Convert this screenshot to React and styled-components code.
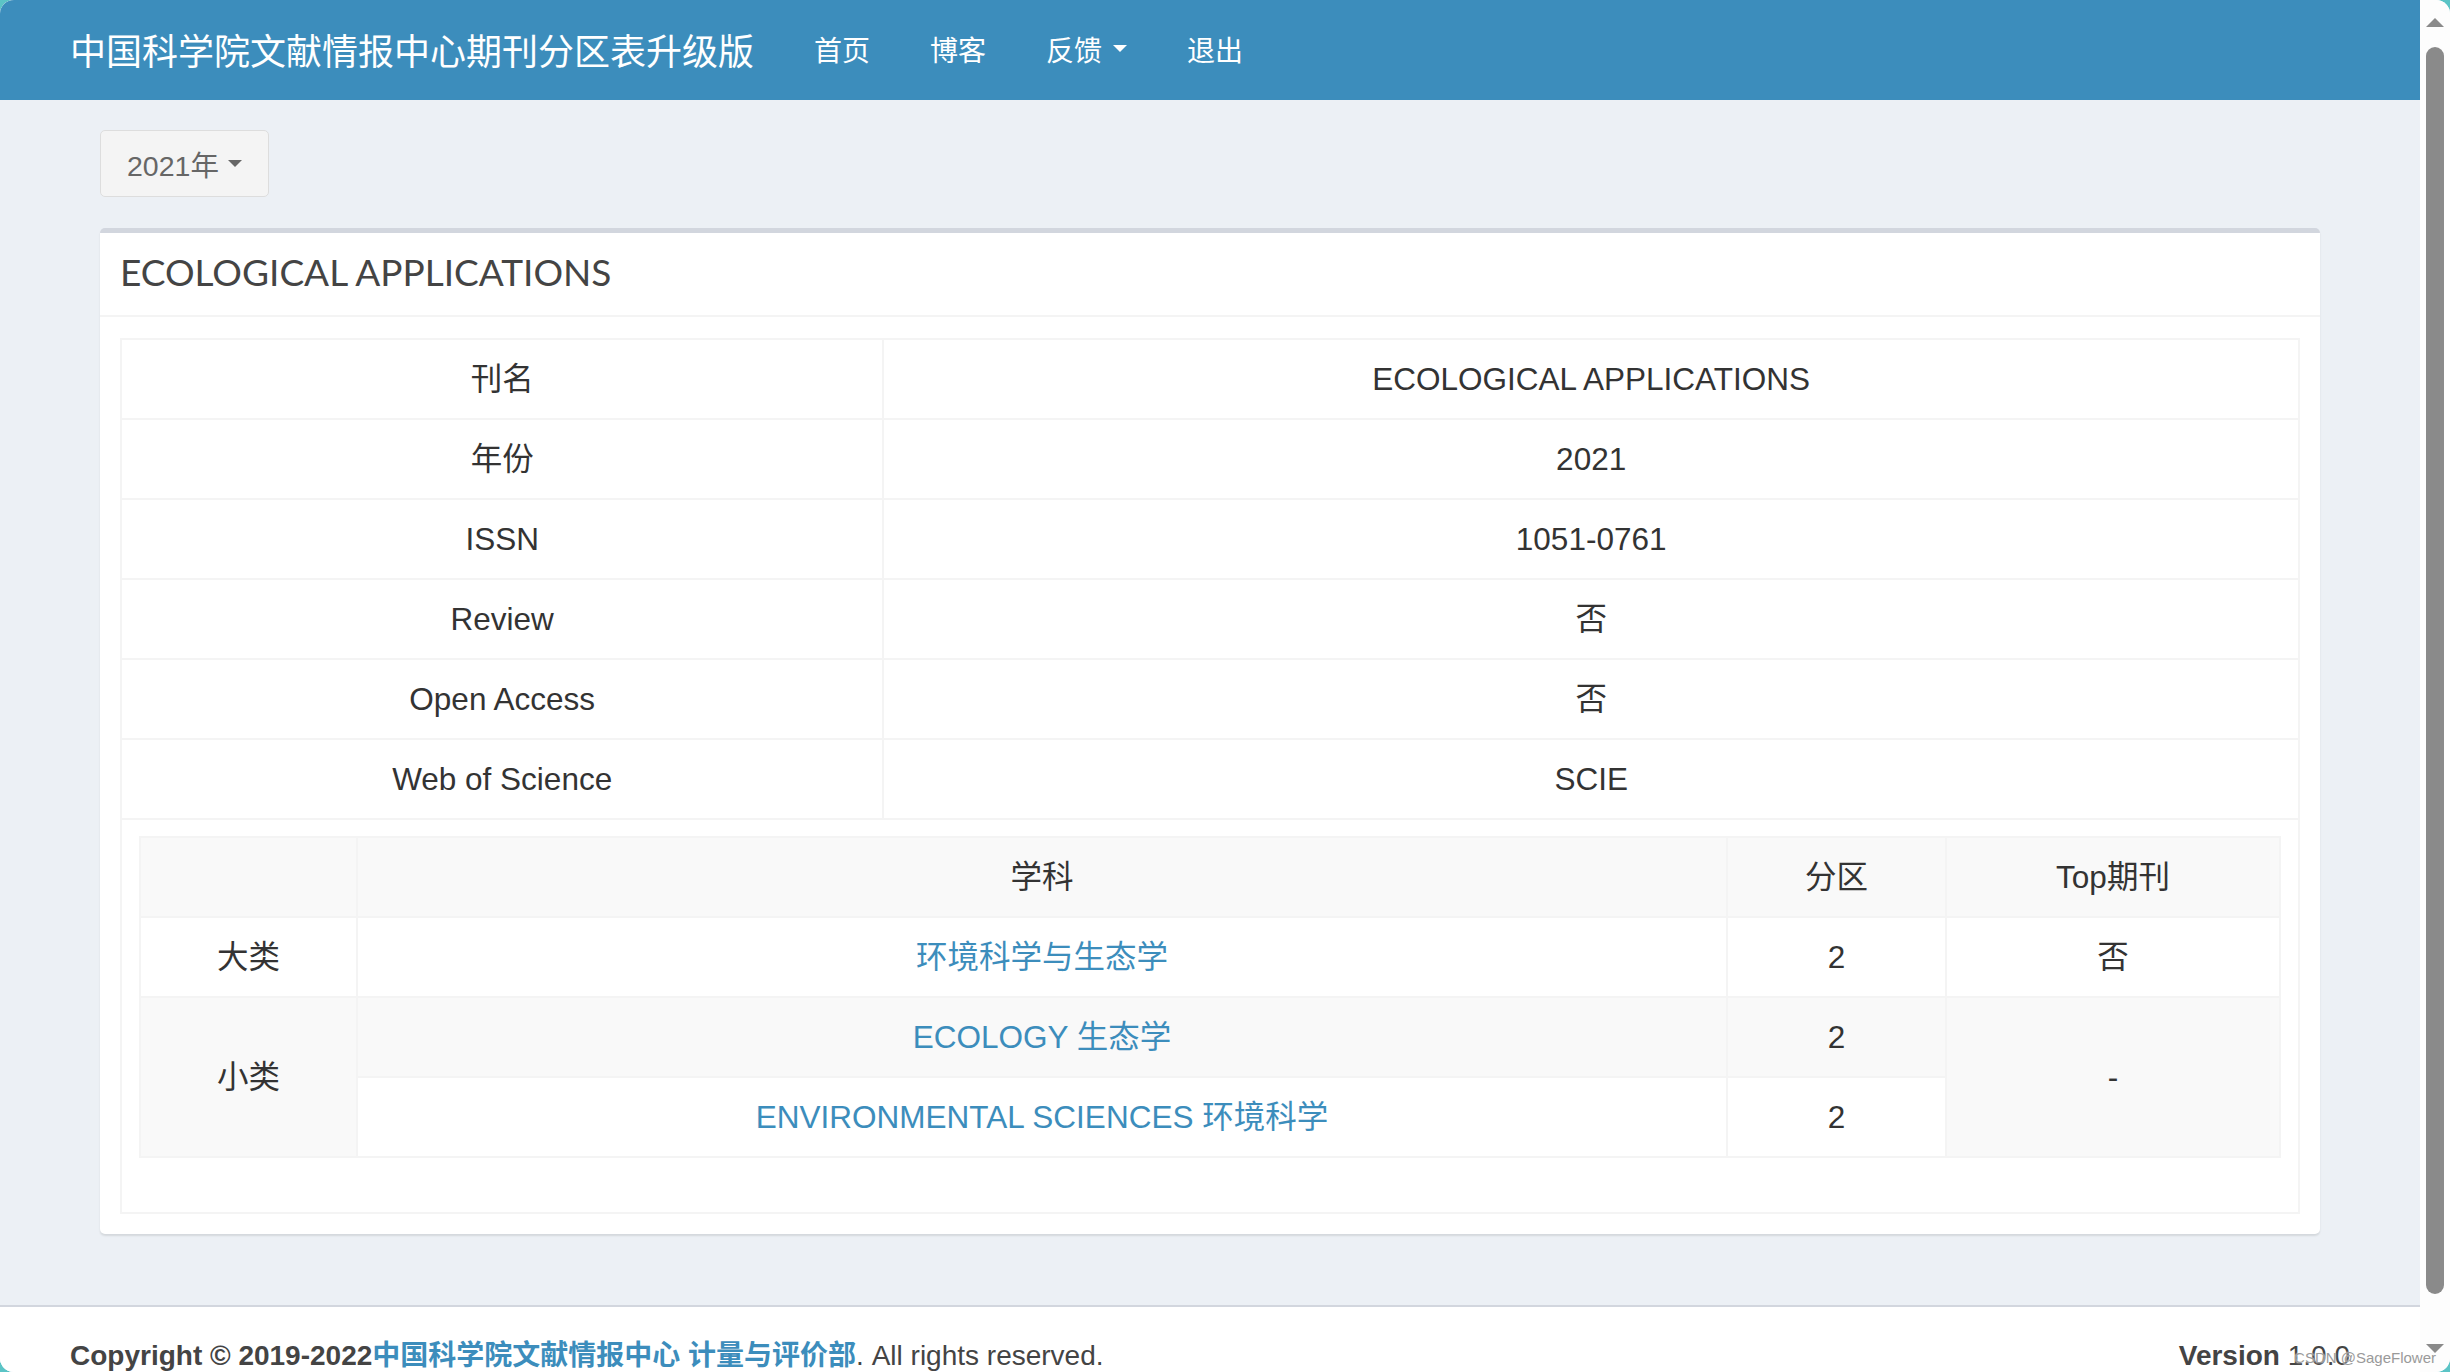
import React from "react";
import styled, { createGlobalStyle } from "styled-components";

const GlobalStyle = createGlobalStyle`
  html, body {
    margin: 0;
    padding: 0;
    overflow: hidden;
    background: #5bc4c6;
  }
  body {
    font-family: "Liberation Sans", "Noto Sans CJK SC", sans-serif;
    color: #333;
  }
  * {
    box-sizing: border-box;
  }
`;

const Screen = styled.div`
  position: relative;
  display: flex;
  width: 2450px;
  height: 1372px;
  border-radius: 14px;
  overflow: hidden;
  background: #fdfdfd;
`;

const Page = styled.div`
  flex: 1;
  min-width: 0;
  display: flex;
  flex-direction: column;
  background: #ecf0f5;
`;

const Header = styled.header`
  flex-shrink: 0;
  height: 100px;
  display: flex;
  align-items: center;
  padding: 0 0 3px 70px;
  background: #3c8dbc;
  color: #fff;
  font-family: "Noto Sans CJK SC", sans-serif;
`;

const Brand = styled.div`
  font-size: 36px;
  padding-right: 30px;
`;

const NavItem = styled.a`
  display: flex;
  align-items: center;
  gap: 11px;
  padding: 0 30px;
  font-size: 28px;
  color: #fff;
  text-decoration: none;
`;

const Caret = styled.span`
  display: inline-block;
  width: 0;
  height: 0;
  border-left: ${(p) => p.size}px solid transparent;
  border-right: ${(p) => p.size}px solid transparent;
  border-top: ${(p) => p.size}px solid ${(p) => p.color};
`;

const Content = styled.main`
  flex-shrink: 0;
  padding: 30px 100px 71px;
`;

const YearButton = styled.button`
  display: inline-flex;
  align-items: center;
  gap: 9px;
  height: 67px;
  padding: 0 26px 0 26px;
  font-family: "Liberation Sans", "Noto Sans CJK SC", sans-serif;
  font-size: 28.5px;
  color: #666;
  background: #f4f4f4;
  border: 1px solid #ddd;
  border-radius: 5px;
`;

const Box = styled.section`
  margin-top: 31px;
  background: #fff;
  border-top: 5px solid #d2d6de;
  border-radius: 5px;
  box-shadow: 0 2px 2px rgba(0, 0, 0, 0.1);
`;

const BoxHeader = styled.div`
  height: 84px;
  display: flex;
  align-items: center;
  padding: 0 20px 6px;
  border-bottom: 2px solid #f4f4f4;
`;

const BoxTitle = styled.h3`
  margin: 0;
  font-family: Lato, "Noto Sans CJK SC", sans-serif;
  font-weight: 400;
  font-size: 37px;
  color: #444;
`;

const BoxBody = styled.div`
  padding: 21px 20px 20px;
`;

const Table = styled.table`
  width: 100%;
  border-collapse: collapse;
  table-layout: fixed;
  font-size: 31.5px;
`;

const Cell = styled.td`
  padding: 17px;
  line-height: 44px;
  text-align: center;
  vertical-align: middle;
  border: 2px solid #f4f4f4;
  background: ${(p) => (p.$shade ? "#f9f9f9" : "#fff")};
`;

const NestCell = styled.td`
  padding: 16px 17px 54px;
  border: 2px solid #f4f4f4;
`;

const Link = styled.a`
  color: #3c8dbc;
  text-decoration: none;
`;

const Footer = styled.footer`
  flex: 1;
  display: flex;
  justify-content: space-between;
  padding: 29px 70px 0;
  font-size: 28px;
  line-height: 40px;
  color: #444;
  background: #fff;
  border-top: 2px solid #d2d6de;
  overflow: hidden;
`;

const FooterLink = styled.a`
  font-weight: 700;
  color: #3c8dbc;
  text-decoration: none;
`;

const ScrollTrack = styled.div`
  width: 30px;
  flex-shrink: 0;
  display: flex;
  flex-direction: column;
  align-items: center;
  padding: 18px 0 19px;
  background: #fdfdfd;
`;

const Arrow = styled.span`
  width: 0;
  height: 0;
  border-left: 9px solid transparent;
  border-right: 9px solid transparent;
  ${(p) => (p.$up ? "border-bottom" : "border-top")}: 9px solid #8a8a8a;
`;

const Thumb = styled.div`
  width: 18px;
  height: 1247px;
  margin-top: 20px;
  border-radius: 9px;
  background: #8a8a8a;
`;

const Spacer = styled.div`
  flex: 1;
`;

const Watermark = styled.span`
  position: absolute;
  right: 14px;
  bottom: 6px;
  font-size: 15px;
  color: #9a9a9a;
  text-shadow: 0 0 2px #fff;
`;

const info = [
  ["刊名", "ECOLOGICAL APPLICATIONS"],
  ["年份", "2021"],
  ["ISSN", "1051-0761"],
  ["Review", "否"],
  ["Open Access", "否"],
  ["Web of Science", "SCIE"],
];

export default function App() {
  return (
    <>
      <GlobalStyle />
      <Screen>
        <Page>
          <Header>
            <Brand>中国科学院文献情报中心期刊分区表升级版</Brand>
            <NavItem>首页</NavItem>
            <NavItem>博客</NavItem>
            <NavItem>
              反馈
              <Caret size={7} color="#fff" />
            </NavItem>
            <NavItem>退出</NavItem>
          </Header>

          <Content>
            <YearButton>
              2021年
              <Caret size={7} color="#666" />
            </YearButton>

            <Box>
              <BoxHeader>
                <BoxTitle>ECOLOGICAL APPLICATIONS</BoxTitle>
              </BoxHeader>
              <BoxBody>
                <Table>
                  <colgroup>
                    <col style={{ width: "35%" }} />
                    <col />
                  </colgroup>
                  <tbody>
                    {info.map(([k, v]) => (
                      <tr key={k}>
                        <Cell>{k}</Cell>
                        <Cell>{v}</Cell>
                      </tr>
                    ))}
                    <tr>
                      <NestCell colSpan={2}>
                        <Table>
                          <colgroup>
                            <col style={{ width: "217px" }} />
                            <col />
                            <col style={{ width: "219px" }} />
                            <col style={{ width: "334px" }} />
                          </colgroup>
                          <tbody>
                            <tr>
                              <Cell $shade></Cell>
                              <Cell $shade>学科</Cell>
                              <Cell $shade>分区</Cell>
                              <Cell $shade>Top期刊</Cell>
                            </tr>
                            <tr>
                              <Cell>大类</Cell>
                              <Cell>
                                <Link>环境科学与生态学</Link>
                              </Cell>
                              <Cell>2</Cell>
                              <Cell>否</Cell>
                            </tr>
                            <tr>
                              <Cell $shade rowSpan={2}>
                                小类
                              </Cell>
                              <Cell $shade>
                                <Link>ECOLOGY 生态学</Link>
                              </Cell>
                              <Cell $shade>2</Cell>
                              <Cell $shade rowSpan={2}>
                                -
                              </Cell>
                            </tr>
                            <tr>
                              <Cell>
                                <Link>ENVIRONMENTAL SCIENCES 环境科学</Link>
                              </Cell>
                              <Cell>2</Cell>
                            </tr>
                          </tbody>
                        </Table>
                      </NestCell>
                    </tr>
                  </tbody>
                </Table>
              </BoxBody>
            </Box>
          </Content>

          <Footer>
            <div>
              <strong>Copyright © 2019-2022</strong>
              <FooterLink>中国科学院文献情报中心 计量与评价部</FooterLink>. All
              rights reserved.
            </div>
            <div>
              <strong>Version</strong> 1.0.0
            </div>
          </Footer>
        </Page>

        <ScrollTrack>
          <Arrow $up />
          <Thumb />
          <Spacer />
          <Arrow />
        </ScrollTrack>

        <Watermark>CSDN @SageFlower</Watermark>
      </Screen>
    </>
  );
}
